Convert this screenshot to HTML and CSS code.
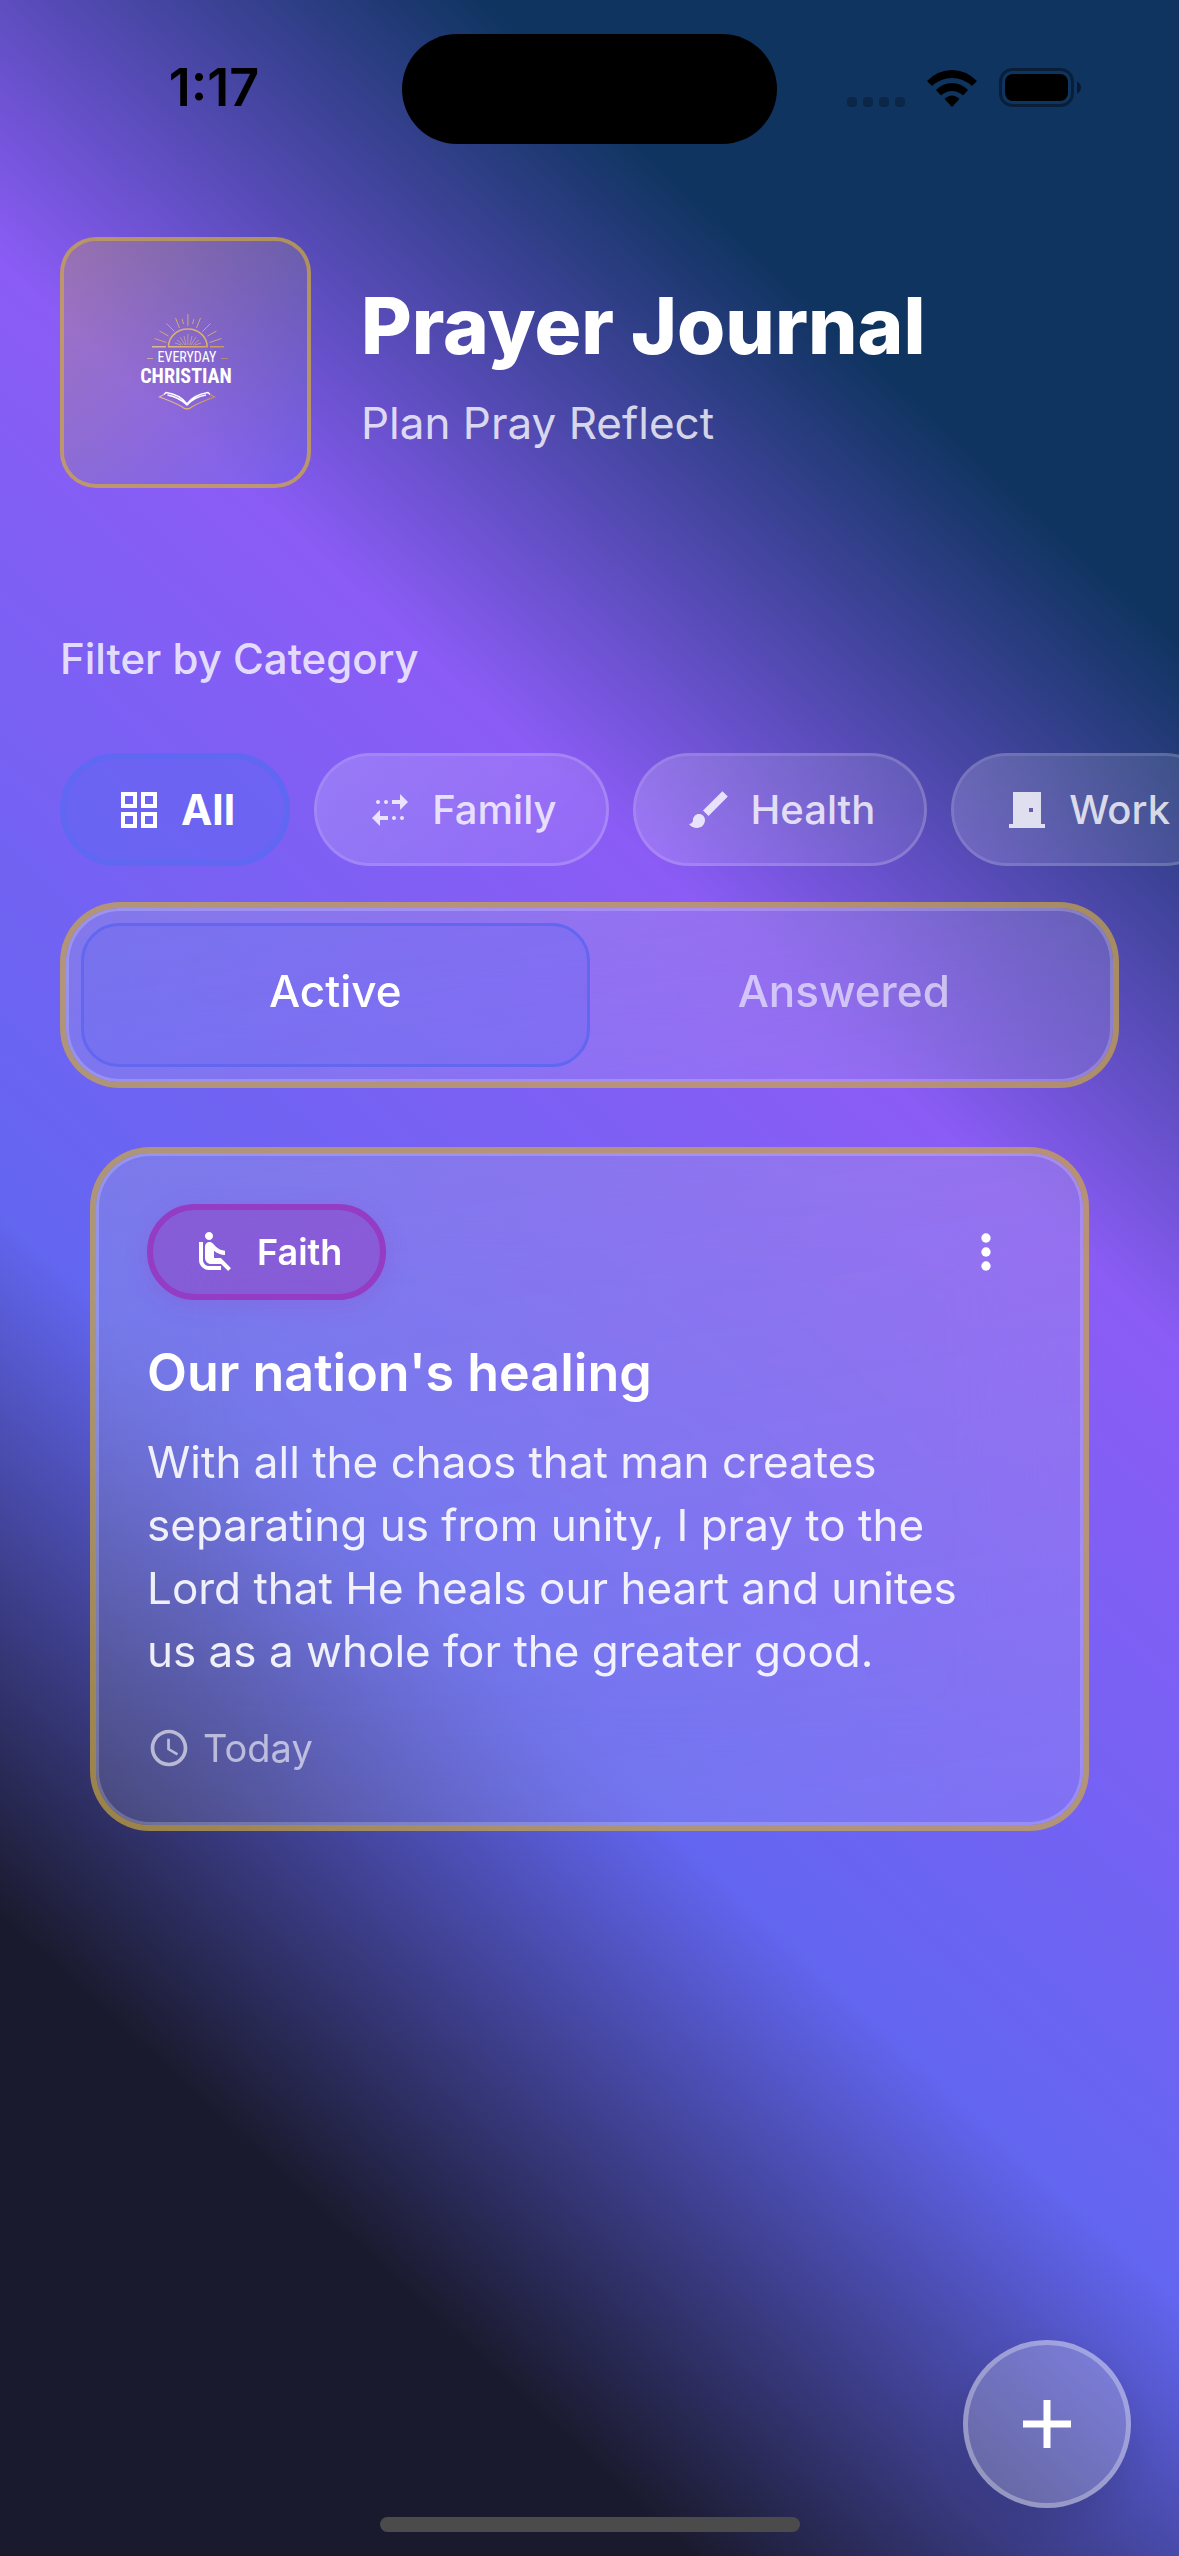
FILE: index.html
```html
<!DOCTYPE html>
<html lang="en">
<head>
<meta charset="utf-8">
<meta name="viewport" content="width=device-width, initial-scale=1">
<title>Prayer Journal</title>
<link rel="stylesheet" href="styles.css">
</head>
<body>
<div class="screen">
  <div class="status">
    <span class="status-time">1:17</span>
    <span class="status-island"></span>
    <span class="status-icons">
      <svg class="status-signal" viewBox="0 0 58 10" aria-hidden="true"><rect width="10" height="10" rx="4"/><rect x="16" width="10" height="10" rx="4"/><rect x="32" width="10" height="10" rx="4"/><rect x="48" width="10" height="10" rx="4"/></svg>
      <svg class="status-wifi" viewBox="0 0 50 37" aria-hidden="true"><path d="M0 11Q11 0 25 0T50 11L45 16Q36 8 25 8T5 16Z"/><path d="M9 20Q16 13 25 13T41 20L36 25.500Q31 21 25 21T14 25.500Z"/><path d="M17.500 29Q21 25.500 25 25.500T32.500 29L25 37Z"/></svg>
      <svg class="status-battery" viewBox="0 0 82 39" aria-hidden="true"><rect x="1.500" y="1.500" width="72" height="36" rx="12" fill="none" stroke="#000" stroke-opacity=".4" stroke-width="3"/><rect x="6" y="6" width="63" height="27" rx="8"/><path d="M78 13.500Q82 15.500 82 19.500T78 25.500Z" fill-opacity=".5"/></svg>
    </span>
  </div>

  <main class="content">
    <header class="header">
      <div class="logo">
        <svg class="logo-art" viewBox="0 0 130 130" role="img" aria-label="Everyday Christian">
          <defs><linearGradient id="gold" x1="0" x2="1" y1="0" y2="0"><stop offset="0" stop-color="#dcbc9a"/><stop offset=".5" stop-color="#e0b070"/><stop offset="1" stop-color="#c4915f"/></linearGradient></defs>
          <g fill="none" stroke="#dfb06c">
            <path stroke-width="1.500" d="M47.500 48.500a19.300 17.500 0 0 1 38.600 0"/>
            <path stroke="#d3a678" stroke-width="1" d="M66.900 16v12M54.500 20l4 10M79.500 20l-4 10M45.500 25.500l8 8M89.500 25.500l-8 8M38.500 33l9 5M95.500 33l-9 5M33.500 40.500l12 4M100.500 40.500l-12 4M61 21l1.500 5M73 21l-1.500 5"/>
            <path stroke="#c9a3a0" stroke-width=".8" d="M66.900 36v11M63 38l2 9M71 38l-2 9M59 39l5 8M75 39l-5 8M56 42l6 5M78 42l-6 5M54 45l6 2M80 45l-6 2"/>
          </g>
          <path fill="url(#gold)" d="M31 48h14v1.500H31zM47 48h40v1.500H47zM89 48h14v1.500H89zM26 60h6v.8h-6zM100 60h7v.8h-7z"/>
          <text class="logo-small" x="66" y="64" text-anchor="middle">EVERYDAY</text>
          <text class="logo-large" x="65" y="85" text-anchor="middle">CHRISTIAN</text>
          <path fill="none" stroke="#fff" stroke-width="1.400" d="M43 96.500l2-2q14 2 21 11.500q6-9 21-11.500l2 2M46.500 97q12 2.500 19.500 10q7-8 19-10"/>
          <path fill="none" stroke="url(#gold)" stroke-width="1.200" d="M43 96.500l-4.500 2.500q14 5 22 9.500q5.500 5 11 0q8-4.500 22-9.500l-4.500-2.500"/>
        </svg>
      </div>
      <div class="header-text">
        <h1 class="title">Prayer Journal</h1>
        <p class="subtitle">Plan Pray Reflect</p>
      </div>
    </header>

    <h2 class="filter-label" id="filter-label">Filter by Category</h2>
    <div class="chips" role="group" aria-labelledby="filter-label">
      <button class="chip chip-on" type="button" aria-pressed="true">
        <svg class="chip-icon" viewBox="0 0 24 24" aria-hidden="true"><path d="M3 3v8h8V3H3zm6 6H5V5h4v4zm-6 4v8h8v-8H3zm6 6H5v-4h4v4zm4-16v8h8V3h-8zm6 6h-4V5h4v4zm-6 4v8h8v-8h-8zm6 6h-4v-4h4v4z"/></svg>
        <span>All</span>
      </button>
      <button class="chip" type="button" aria-pressed="false">
        <svg class="chip-icon" viewBox="0 0 24 24" aria-hidden="true"><path d="M17 4l4 4-4 4V9h-4V7h4V4zM7 20l-4-4 4-4v3h4v2H7v3z"/><circle cx="10" cy="8" r="1"/><circle cx="6" cy="8" r="1"/><circle cx="14" cy="16" r="1"/><circle cx="18" cy="16" r="1"/></svg>
        <span>Family</span>
      </button>
      <button class="chip" type="button" aria-pressed="false">
        <svg class="chip-icon" viewBox="0 0 24 24" aria-hidden="true"><path d="M7 14c-1.660 0-3 1.340-3 3 0 1.310-1.160 2-2 2 .92 1.220 2.490 2 4 2 2.210 0 4-1.790 4-4 0-1.660-1.340-3-3-3zM18.700 2.600L9 12.250 11.750 15l9.650-9.700z"/></svg>
        <span>Health</span>
      </button>
      <button class="chip" type="button" aria-pressed="false">
        <svg class="chip-icon" viewBox="0 0 24 24" aria-hidden="true"><path d="M19 19V3H5v16H3v2h18v-2h-2zm-4-6h-2v-2h2v2z"/></svg>
        <span>Work</span>
      </button>
    </div>

    <div class="glass tabs" role="tablist">
      <button class="tab tab-on" type="button" role="tab" aria-selected="true">Active</button>
      <button class="tab" type="button" role="tab" aria-selected="false">Answered</button>
    </div>

    <article class="glass card">
      <div class="card-top">
        <span class="tag">
          <svg class="tag-icon" viewBox="0 0 24 24" aria-hidden="true"><path d="M7.590 5.410c-.78-.78-.78-2.050 0-2.830.78-.78 2.050-.78 2.830 0 .78.78.78 2.050 0 2.830-.79.79-2.050.79-2.830 0zM6 16V7H4v9c0 2.760 2.240 5 5 5h6v-2H9c-1.660 0-3-1.340-3-3zm14 4.070L14.930 15H11.500v-3.680c1.400 1.150 3.600 2.160 5.500 2.160v-2.160c-1.660.02-3.610-.87-4.670-2.040l-1.400-1.550c-.19-.21-.43-.38-.69-.5-.29-.14-.62-.23-.96-.23h-.03C8.010 7 7 8.010 7 9.250V15c0 1.660 1.340 3 3 3h5.070l3.500 3.500L20 20.070z"/></svg>
          <span>Faith</span>
        </span>
        <button class="menu" type="button" aria-label="Prayer options">
          <svg class="menu-icon" viewBox="0 0 24 24" aria-hidden="true"><circle cx="12" cy="6" r="2"/><circle cx="12" cy="12" r="2"/><circle cx="12" cy="18" r="2"/></svg>
        </button>
      </div>
      <h3 class="card-title">Our nation's healing</h3>
      <p class="card-body">With all the chaos that man creates separating us from unity, I pray to the Lord that He heals our heart and unites us as a whole for the greater good.</p>
      <div class="card-date">
        <svg class="date-icon" viewBox="0 0 24 24" aria-hidden="true"><path d="M11.990 2C6.470 2 2 6.480 2 12s4.470 10 9.990 10C17.520 22 22 17.520 22 12S17.520 2 11.990 2zM12 20c-4.420 0-8-3.580-8-8s3.580-8 8-8 8 3.580 8 8-3.580 8-8 8zm.5-13H11v6l5.250 3.150.75-1.230-4.500-2.670z"/></svg>
        <span>Today</span>
      </div>
    </article>
  </main>

  <button class="fab" type="button" aria-label="Add prayer">
    <svg class="fab-icon" viewBox="0 0 84 84" aria-hidden="true"><path d="M38.500 18h7v20.500H66v7H45.500V66h-7V45.500H18v-7h20.500z"/></svg>
  </button>
  <div class="home-bar"></div>
</div>
</body>
</html>
```
FILE: styles.css
```css
* { box-sizing: border-box; }

body {
  margin: 0;
  font-family: Inter, "Liberation Sans", sans-serif;
  color: #fff;
}

h1, h2, h3, p { margin: 0; }

button {
  margin: 0;
  padding: 0;
  border: 0;
  background: none;
  color: inherit;
  font: inherit;
}

svg { display: block; flex: none; fill: currentColor; }

.screen {
  min-height: 100vh;
  overflow: hidden;
  background: linear-gradient(222.69deg, #0f3460 17.53%, #8b5cf6 37%, #6366f1 63%, #1a1a2e 82.47%);
}

/* Status bar */
.status {
  display: grid;
  grid-template-columns: 1fr 375px 1fr;
  align-items: center;
  padding: 34px 0 0;
  color: #000;
}
.status-time {
  padding: 0 0 2px 26px;
  text-align: center;
  font-size: 52px;
  line-height: 60px;
  font-weight: 600;
}
.status-island { height: 110px; border-radius: 55px; background: #000; }
.status-icons {
  display: flex;
  align-items: flex-end;
  justify-content: flex-end;
  gap: 22px;
  padding: 0 98px 4px 0;
}
.status-signal { width: 58px; height: 10px; opacity: .25; }
.status-wifi { width: 50px; height: 37px; }
.status-battery { width: 82px; height: 39px; }

.content { padding: 93px 0 0; }

/* Header */
.header {
  display: flex;
  align-items: center;
  gap: 50px;
  padding: 0 60px;
}
.logo {
  display: flex;
  flex: none;
  align-items: center;
  justify-content: center;
  width: 251px;
  height: 251px;
  border: 4px solid rgba(212, 175, 55, .7);
  border-radius: 36px;
  background: linear-gradient(135deg, rgba(212, 175, 55, .3), rgba(99, 102, 241, .3)) padding-box;
}
.logo-art { width: 130px; height: 130px; }
.logo-small { font: 400 14px "Liberation Sans Narrow", "Roboto Condensed", "Open Sans Condensed", Roboto, sans-serif; }
.logo-large { font: 700 20px "Liberation Sans Narrow", "Roboto Condensed", "Open Sans Condensed", Roboto, sans-serif; }
.header-text { padding-top: 8px; }
.title { font-size: 78px; line-height: 90px; font-weight: 800; }
.subtitle {
  padding-top: 22px;
  color: rgba(255, 255, 255, .8);
  font-size: 44px;
  line-height: 60px;
}

/* Category filter */
.filter-label {
  padding: 146px 60px 0;
  color: rgba(255, 255, 255, .8);
  font-size: 42px;
  line-height: 50px;
  font-weight: 500;
}
.chips {
  display: flex;
  gap: 24px;
  margin-top: 69px;
  padding: 0 60px;
  overflow: hidden;
}
.chip {
  display: flex;
  flex: none;
  align-items: center;
  gap: 18px;
  height: 113px;
  padding: 0 49px;
  border: 3px solid rgba(255, 255, 255, .25);
  border-radius: 57px;
  background: linear-gradient(135deg, rgba(255, 255, 255, .18), rgba(255, 255, 255, .08)) padding-box;
  color: rgba(255, 255, 255, .8);
  font-size: 40px;
  font-weight: 500;
}
.chip-icon { width: 48px; height: 48px; }
.chip-on {
  border: 6px solid #6067f2;
  background: rgba(99, 102, 241, .6);
  color: #fff;
  font-size: 42px;
  font-weight: 700;
}

/* Frosted panel with a gold rim and a pale inner line */
.glass {
  border: 6px solid rgba(212, 175, 55, .65);
  border-radius: 60px;
  background: linear-gradient(170deg, rgba(200, 210, 210, .2), rgba(255, 255, 255, .1)) padding-box;
  box-shadow: inset 0 0 0 3px rgba(255, 255, 255, .2);
  backdrop-filter: blur(60px);
}

.tabs {
  display: grid;
  grid-template-columns: 1fr 1fr;
  margin: 36px 60px 0;
  padding: 15px;
}
.tab {
  height: 144px;
  padding-bottom: 8px;
  border-radius: 38px;
  color: rgba(255, 255, 255, .6);
  font-size: 44px;
  font-weight: 500;
}
.tab-on {
  border: 3px solid #6366f1;
  background: rgba(99, 102, 241, .3);
  color: #fff;
}

/* Prayer card */
.card { margin: 59px 90px 0; padding: 51px; }
.card-top { display: flex; align-items: center; justify-content: space-between; }
.tag {
  display: flex;
  align-items: center;
  gap: 18px;
  height: 96px;
  padding: 0 38px;
  border: 6px solid #943cc3;
  border-radius: 48px;
  background: rgba(156, 39, 176, .35);
  box-shadow: 0 6px 24px rgba(156, 39, 176, .15);
  font-size: 36px;
  font-weight: 600;
}
.tag-icon { width: 48px; height: 48px; }
.menu { display: grid; place-items: center; width: 92px; height: 92px; }
.menu-icon { width: 56px; height: 56px; }
.card-title {
  padding-top: 42px;
  font-size: 52px;
  line-height: 62px;
  font-weight: 600;
}
.card-body {
  padding: 27px 45px 0 0;
  color: rgba(255, 255, 255, .9);
  font-size: 44px;
  line-height: 63px;
}
.card-date {
  display: flex;
  align-items: center;
  gap: 12px;
  padding-top: 39px;
  color: rgba(255, 255, 255, .6);
  font-size: 38px;
  line-height: 52px;
}
.date-icon { width: 44px; height: 44px; }

/* Floating controls */
.fab {
  position: fixed;
  right: 48px;
  bottom: 48px;
  display: grid;
  place-items: center;
  width: 168px;
  height: 168px;
  border: 5px solid rgba(255, 255, 255, .3);
  border-radius: 50%;
  background: rgba(255, 255, 255, .22) border-box;
  box-shadow: 0 12px 30px rgba(0, 0, 0, .08);
}
.fab-icon { width: 84px; height: 84px; }
.home-bar {
  position: fixed;
  bottom: 24px;
  left: 50%;
  width: 420px;
  height: 15px;
  margin-left: -210px;
  border-radius: 8px;
  background: #4b4b4b;
}
```
